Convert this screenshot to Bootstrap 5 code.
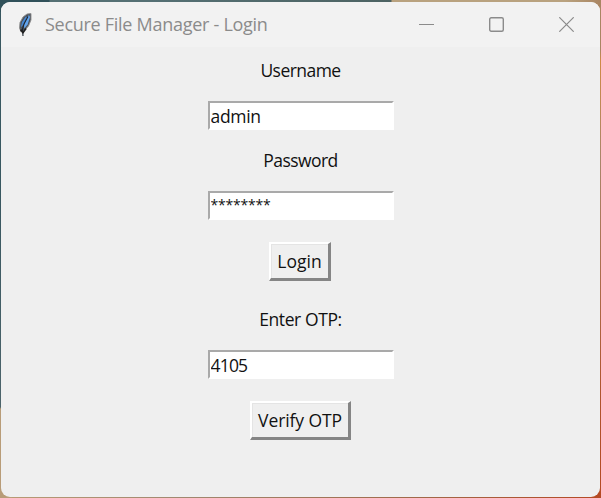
<!DOCTYPE html>
<html lang="en">
<head>
<meta charset="utf-8">
<meta name="viewport" content="width=device-width, initial-scale=1">
<title>Secure File Manager - Login</title>
<link href="https://cdn.jsdelivr.net/npm/bootstrap@5.3.0/dist/css/bootstrap.min.css" rel="stylesheet">
<style>
html, body { height: 100%; }
body {
  overflow: hidden; padding: 2px 1px 1px;
  font-family: "Open Sans", "Noto Sans", sans-serif; color: #111;
  background:
    linear-gradient(90deg, #31515a 0 49px, #557074 50px 150px, #4d6363 391px, #b9a27f 392px 565px, #a98562) top / 100% 12px no-repeat,
    linear-gradient(#385760 0 188px, #4c646b 407px, #b89c78 409px) left / 12px 100% no-repeat,
    linear-gradient(#a98562 0 50px, #cf8a45 60px, #a9866a 160px, #b0532c 400px, #b54a24) right / 12px 100% no-repeat,
    linear-gradient(90deg, #b99a74, #a08870 30%, #a06848 70%, #b54a24) bottom / 100% 12px no-repeat;
}
.app-window { border-radius: 9px; background: #efefef; overflow: hidden; }
.title-strip { height: 45px; background: #f2f2f2; padding-left: 14px; color: #8b8b8b; }
.title-label { font-size: 18px; letter-spacing: -.28px; margin-left: 9px; line-height: 24px; padding-bottom: 2px; }
.caption-icons { gap: 55px; padding: 0 26px 1px 0; }
.login-form { padding-top: 11px; }
.field { margin-bottom: 18px; }
.field-label { font-size: 17.5px; line-height: 24px; letter-spacing: -.55px; margin-bottom: 19px; }
.field-label.tight { letter-spacing: -.4px; }
.entry {
  width: 186px; height: 29px; padding: 0 0 0 1px; border: 2px solid; outline: 0;
  border-color: #a9a9a9 #fff #fff #a9a9a9; background: #fff; color: #111;
  font-size: 17.5px; letter-spacing: -.3px; line-height: 24px; border-radius: 0;
}
.entry.digits { letter-spacing: -.8px; }
.entry.stars { font-size: 14px; letter-spacing: -.2px; padding-bottom: 3px; }
.raised {
  height: 39px; padding: 0 0 1px; border: 2px solid; border-color: #fff #858585 #858585 #fff;
  border-right-width: 3px; border-bottom-width: 3px;
  border-radius: 0; background: #efefef; color: #111; font-size: 17.5px; line-height: 24px;
  box-shadow: inset 1px 1px #e4e4e4; margin-top: 4px;
}
.raised.login { width: 62px; letter-spacing: .05px; margin-right: 1px; margin-bottom: 26px; }
.raised.verify { width: 101px; letter-spacing: -.1px; }
</style>
<script src="https://cdn.jsdelivr.net/npm/bootstrap@5.3.0/dist/js/bootstrap.bundle.min.js"></script>
</head>
<body>
<main class="app-window h-100 d-flex flex-column">
  <header class="title-strip d-flex align-items-center justify-content-between flex-shrink-0">
    <div class="d-flex align-items-center">
      <svg width="21" height="26" viewBox="0 0 21 26" aria-hidden="true">
        <path d="M6 20 L4.5 16 L5 10.5 L8 5 L12 2 L16 1.5 L16 8 L13.5 14 L9.5 18.5Z" fill="#4c535c" stroke="#8e8e8e" stroke-width=".9"/>
        <path d="M14 3 L15 5 L12.6 12.5 L9.2 16.5 L9 13 L11.5 6Z" fill="#62a5ef"/>
        <path d="M10.8 4.5 L7 10 L5.8 15.5 L8.5 12.5 L12 5Z" fill="#4686d0"/>
        <path d="M13 4.5 L9 12 L7.5 17 L8 24" fill="none" stroke="#1d2630" stroke-width="1.1"/>
        <path d="M5.5 17.5 L8 20.5 L11 16.5" fill="none" stroke="#202020" stroke-width="1.8"/>
      </svg>
      <span class="title-label">Secure File Manager - Login</span>
    </div>
    <div class="caption-icons d-flex align-items-center">
      <svg width="15" height="15" viewBox="0 0 15 15" fill="none" stroke="#8b8b8b"><path d="M0 7.5H15"/></svg>
      <svg width="15" height="15" viewBox="0 0 15 15" fill="none" stroke="#8b8b8b" stroke-width="1.4"><rect x=".7" y=".7" width="13.6" height="13.6" rx="1.5"/></svg>
      <svg width="15" height="15" viewBox="0 0 15 15" fill="none" stroke="#8b8b8b" stroke-width="1.2"><path d="M.3.3l14.4 14.4M14.7.3L.3 14.7"/></svg>
    </div>
  </header>
  <form class="login-form d-flex flex-column align-items-center">
    <div class="field d-flex flex-column align-items-center">
      <label class="field-label" for="user">Username</label>
      <input id="user" class="entry d-block" value="admin">
    </div>
    <div class="field d-flex flex-column align-items-center">
      <label class="field-label" for="pass">Password</label>
      <input id="pass" class="entry stars d-block" value="********">
    </div>
    <button type="button" class="raised login">Login</button>
    <div class="field d-flex flex-column align-items-center">
      <label class="field-label tight" for="otp">Enter OTP:</label>
      <input id="otp" class="entry digits d-block" value="4105">
    </div>
    <button type="button" class="raised verify">Verify OTP</button>
  </form>
</main>
</body>
</html>
